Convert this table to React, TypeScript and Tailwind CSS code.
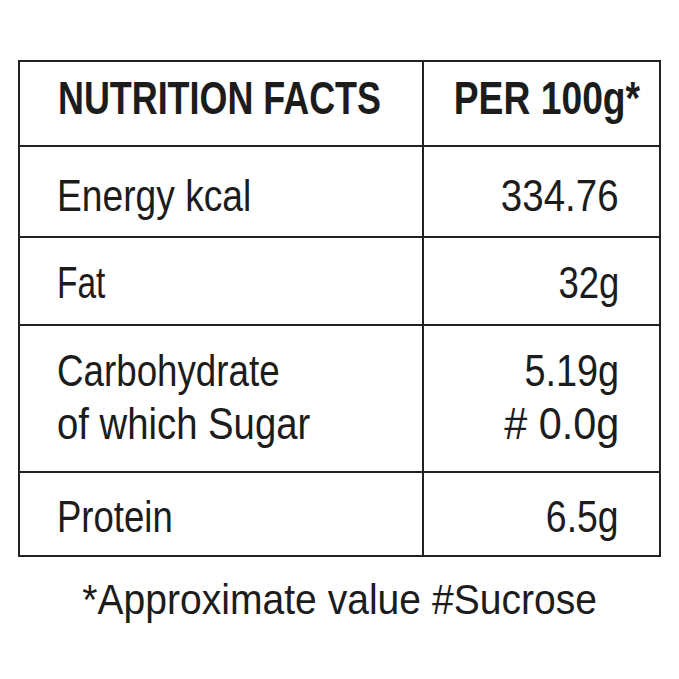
const rows = [
  {
    label: [{ t: "Energy kcal", s: "scale-x-[0.845]" }],
    value: [{ t: "334.76", s: "scale-x-[0.875]" }],
    h: "h-[91px]",
    pt: "pt-[22px]",
  },
  {
    label: [{ t: "Fat", s: "scale-x-[0.76]" }],
    value: [{ t: "32g", s: "scale-x-[0.83]" }],
    h: "h-[88px]",
    pt: "pt-[18px]",
  },
  {
    label: [
      { t: "Carbohydrate", s: "scale-x-[0.835]" },
      { t: "of which Sugar", s: "scale-x-[0.87]" },
    ],
    value: [
      { t: "5.19g", s: "scale-x-[0.86]" },
      { t: "# 0.0g", s: "scale-x-[0.94]" },
    ],
    h: "h-[147px]",
    pt: "pt-[18px]",
  },
  {
    label: [{ t: "Protein", s: "scale-x-[0.83]" }],
    value: [{ t: "6.5g", s: "scale-x-[0.85]" }],
    h: "h-[84px]",
    pt: "pt-[17px]",
  },
];

export default function App() {
  return (
    <div
      className="w-[679px] h-[679px] bg-white text-[#1c1c1c] pt-[60px] pl-[18px]"
      style={{ fontFamily: '"Liberation Sans", Arial, sans-serif' }}
    >
      <div className="w-[643px] border-2 border-[#222]">
        {/* header */}
        <div className="grid grid-cols-[404px_minmax(0,1fr)] h-[83px] text-[46px] leading-[53px] font-bold">
          <div className="pt-[10px] pl-[38px] border-r-2 border-[#222] whitespace-nowrap">
            <span className="inline-block origin-left scale-x-[0.78]">NUTRITION FACTS</span>
          </div>
          <div className="pt-[10px] pr-[19px] flex justify-end whitespace-nowrap">
            <span className="inline-block shrink-0 origin-right scale-x-[0.81]">PER 100g*</span>
          </div>
        </div>

        {rows.map((row, i) => (
          <div
            key={i}
            className={`grid grid-cols-[404px_minmax(0,1fr)] border-t-2 border-[#222] text-[44px] leading-[53px] ${row.h}`}
          >
            <div className={`flex flex-col items-start pl-[37px] border-r-2 border-[#222] ${row.pt}`}>
              {row.label.map((l) => (
                <span key={l.t} className={`inline-block origin-left whitespace-nowrap ${l.s}`}>
                  {l.t}
                </span>
              ))}
            </div>
            <div className={`flex flex-col items-end pr-[40px] ${row.pt}`}>
              {row.value.map((v) => (
                <span key={v.t} className={`inline-block origin-right whitespace-nowrap ${v.s}`}>
                  {v.t}
                </span>
              ))}
            </div>
          </div>
        ))}
      </div>

      <div className="w-[643px] mt-[16px] text-center text-[42px] leading-[53px] whitespace-nowrap">
        <span className="inline-block scale-x-[0.93]">*Approximate value #Sucrose</span>
      </div>
    </div>
  );
}
